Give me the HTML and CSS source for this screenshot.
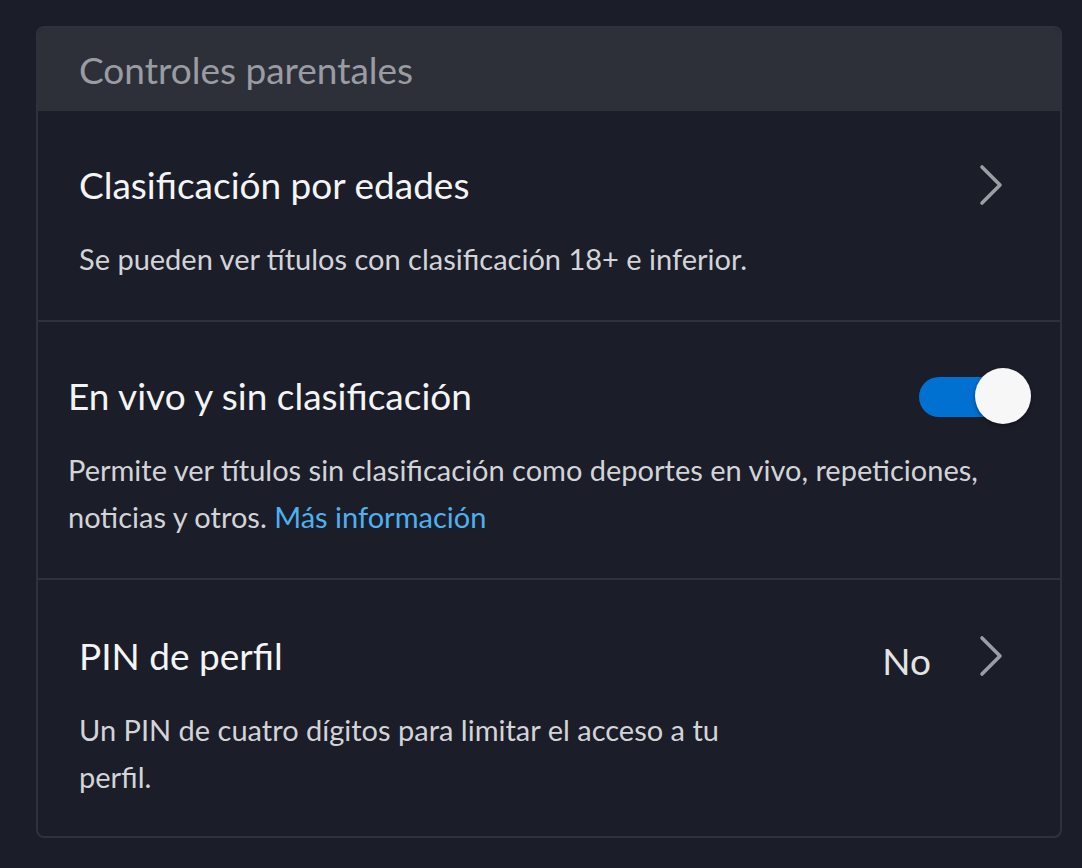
FILE: index.html
```html
<!DOCTYPE html>
<html lang="es">
<head>
<meta charset="utf-8">
<title>Controles parentales</title>
<link rel="stylesheet" href="styles.css">
</head>
<body>
<section class="card">
  <header class="card-header">
    <h2 class="card-title">Controles parentales</h2>
  </header>
  <div class="row row-wide">
    <div class="row-head">
      <h3 class="row-title">Clasificación por edades</h3>
      <svg class="chevron" width="24" height="42" viewBox="0 0 24 42"><polyline points="3,3 21,21 3,39" fill="none" stroke="#9c9ea5" stroke-width="3.6" stroke-linecap="round" stroke-linejoin="round"/></svg>
    </div>
    <p class="row-desc">Se pueden ver títulos con clasificación 18+ e inferior.</p>
  </div>
  <div class="row row-narrow">
    <div class="row-head">
      <h3 class="row-title">En vivo y sin clasificación</h3>
      <div class="toggle"><span class="toggle-track"></span><span class="toggle-knob"></span></div>
    </div>
    <p class="row-desc">Permite ver títulos sin clasificación como deportes en vivo, repeticiones, noticias y otros. <a class="link" href="#">Más información</a></p>
  </div>
  <div class="row row-wide row-last">
    <div class="row-head">
      <h3 class="row-title">PIN de perfil</h3>
      <div class="row-value">
        <span class="value-text">No</span>
        <svg class="chevron" width="24" height="42" viewBox="0 0 24 42"><polyline points="3,3 21,21 3,39" fill="none" stroke="#9c9ea5" stroke-width="3.6" stroke-linecap="round" stroke-linejoin="round"/></svg>
      </div>
    </div>
    <p class="row-desc row-desc-short">Un PIN de cuatro dígitos para limitar el acceso a tu perfil.</p>
  </div>
</section>
</body>
</html>
```
FILE: styles.css
```css
* { box-sizing: border-box; }
html, body { margin: 0; padding: 0; }
body {
  background: #1b1d28;
  font-family: Lato, "Open Sans", sans-serif;
  padding: 26px 20px 0 36px;
  height: 868px;
  overflow: hidden;
}
.card {
  width: 1026px;
  border: 2px solid #2f323c;
  border-radius: 8px;
  overflow: hidden;
  background: #1b1d28;
}
.card-header {
  background: #2e3039;
  height: 83px;
  display: flex;
  align-items: center;
  padding: 0 41px;
}
.card-title {
  margin: 0;
  font-weight: 400;
  font-size: 37px;
  color: #9a9ca3;
  line-height: 44px;
}
.row {
  padding-top: 52px;
  padding-bottom: 38px;
  border-bottom: 2px solid #2f323c;
}
.row-last { border-bottom: none; padding-top: 54px; padding-bottom: 36px; }
.row-wide { padding-left: 41px; padding-right: 57px; }
.row-narrow { padding-left: 30px; padding-right: 29px; }
.row-head {
  display: flex;
  align-items: center;
  justify-content: space-between;
  height: 44px;
}
.row-title {
  margin: 0;
  font-weight: 400;
  font-size: 37px;
  line-height: 44px;
  color: #f3f4f6;
}
.row-desc {
  margin: 28px 0 0;
  font-size: 29px;
  line-height: 47px;
  color: #d2d4d8;
}
.row-desc-short { max-width: 690px; }
.link { color: #4fb0f0; text-decoration: none; }
.chevron { display: block; flex: none; }
.row-value { display: flex; align-items: center; gap: 48px; }
.value-text {
  font-size: 37px;
  line-height: 44px;
  color: #e2e3e6;
  padding-top: 10px;
}
.toggle {
  position: relative;
  width: 112px;
  height: 56px;
  flex: none;
}
.toggle-track {
  position: absolute;
  left: 0;
  top: 9px;
  width: 94px;
  height: 40px;
  border-radius: 20px;
  background: #0070d1;
}
.toggle-knob {
  position: absolute;
  right: 0;
  top: 0;
  width: 56px;
  height: 56px;
  border-radius: 50%;
  background: #f7f7f8;
  box-shadow: 0 2px 4px rgba(0,0,0,0.35);
}
```
